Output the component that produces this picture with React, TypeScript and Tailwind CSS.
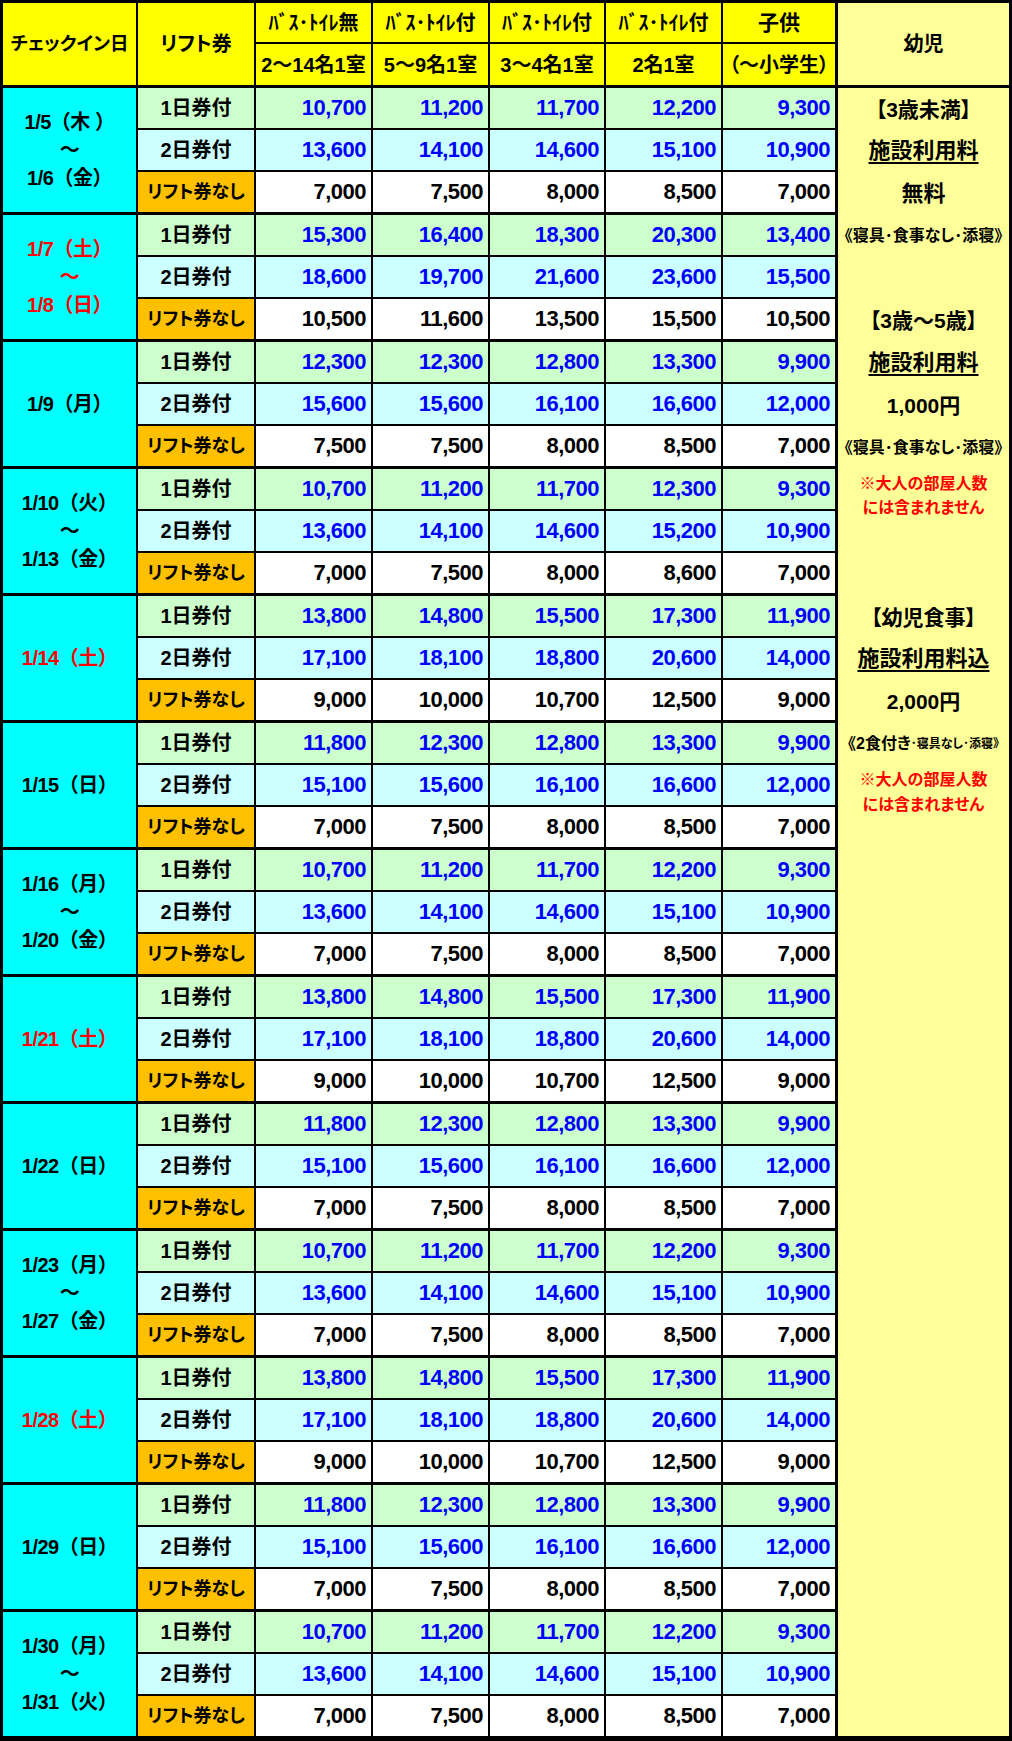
import React from 'react';

type Group = { date: string[]; red: boolean; rows: string[][] };

const WEEKDAY = [
  ['10,700', '11,200', '11,700', '12,200', '9,300'],
  ['13,600', '14,100', '14,600', '15,100', '10,900'],
  ['7,000', '7,500', '8,000', '8,500', '7,000'],
];
const SAT = [
  ['13,800', '14,800', '15,500', '17,300', '11,900'],
  ['17,100', '18,100', '18,800', '20,600', '14,000'],
  ['9,000', '10,000', '10,700', '12,500', '9,000'],
];
const SUN = [
  ['11,800', '12,300', '12,800', '13,300', '9,900'],
  ['15,100', '15,600', '16,100', '16,600', '12,000'],
  ['7,000', '7,500', '8,000', '8,500', '7,000'],
];

const groups: Group[] = [
  { date: ['1/5（木 ）', '～', '1/6（金）'], red: false, rows: WEEKDAY },
  {
    date: ['1/7（土）', '～', '1/8（日）'], red: true, rows: [
      ['15,300', '16,400', '18,300', '20,300', '13,400'],
      ['18,600', '19,700', '21,600', '23,600', '15,500'],
      ['10,500', '11,600', '13,500', '15,500', '10,500'],
    ]
  },
  {
    date: ['1/9（月）'], red: false, rows: [
      ['12,300', '12,300', '12,800', '13,300', '9,900'],
      ['15,600', '15,600', '16,100', '16,600', '12,000'],
      ['7,500', '7,500', '8,000', '8,500', '7,000'],
    ]
  },
  {
    date: ['1/10（火）', '～', '1/13（金）'], red: false, rows: [
      ['10,700', '11,200', '11,700', '12,300', '9,300'],
      ['13,600', '14,100', '14,600', '15,200', '10,900'],
      ['7,000', '7,500', '8,000', '8,600', '7,000'],
    ]
  },
  { date: ['1/14（土）'], red: true, rows: SAT },
  { date: ['1/15（日）'], red: false, rows: SUN },
  { date: ['1/16（月）', '～', '1/20（金）'], red: false, rows: WEEKDAY },
  { date: ['1/21（土）'], red: true, rows: SAT },
  { date: ['1/22（日）'], red: false, rows: SUN },
  { date: ['1/23（月）', '～', '1/27（金）'], red: false, rows: WEEKDAY },
  { date: ['1/28（土）'], red: true, rows: SAT },
  { date: ['1/29（日）'], red: false, rows: SUN },
  { date: ['1/30（月）', '～', '1/31（火）'], red: false, rows: WEEKDAY },
];

const labels = ['1日券付', '2日券付', 'リフト券なし'];
const labelBg = ['bg-[#ccffcc]', 'bg-[#ccffff]', 'bg-[#ffc000]'];
const valBg = ['bg-[#ccffcc]', 'bg-[#ccffff]', 'bg-white'];
const valColor = ['text-[#0000ff]', 'text-[#0000ff]', 'text-black'];

// 幼児欄：行の高さに合わせて1行ずつ積む
function InfantColumn() {
  return (
    <div className="flex flex-col text-[21px] font-bold text-black leading-none">
      <div className="h-[42px] flex items-center justify-center">【3歳未満】</div>
      <div className="h-[42px] flex items-center justify-center text-[22px]">
        <span className="underline underline-offset-[4px] decoration-[1.5px]">施設利用料</span>
      </div>
      <div className="h-[43px] flex items-center justify-center text-[22px]">無料</div>
      <div className="h-[42px] flex items-center justify-center text-[16px]">《寝具･食事なし･添寝》</div>
      <div className="h-[42px]" />
      <div className="h-[43px] flex items-center justify-center">【3歳～5歳】</div>
      <div className="h-[42px] flex items-center justify-center text-[22px]">
        <span className="underline underline-offset-[4px] decoration-[1.5px]">施設利用料</span>
      </div>
      <div className="h-[42px] flex items-center justify-center">1,000円</div>
      <div className="h-[43px] flex items-center justify-center text-[16px]">《寝具･食事なし･添寝》</div>
      <div className="h-[127px] pt-[3px] text-[#ff0000] text-[16px] leading-[24px] text-center">
        <div>※大人の部屋人数</div>
        <div>には含まれません</div>
      </div>
      <div className="h-[42px] flex items-center justify-center">【幼児食事】</div>
      <div className="h-[42px] flex items-center justify-center text-[22px]">
        <span className="underline underline-offset-[4px] decoration-[1.5px]">施設利用料込</span>
      </div>
      <div className="h-[43px] flex items-center justify-center">2,000円</div>
      <div className="h-[42px] flex items-center justify-center text-[16px]">
        《2食付き<span className="text-[12px]">･寝具なし･添寝》</span>
      </div>
      <div className="h-[127px] pt-[2px] text-[#ff0000] text-[16px] leading-[25px] text-center">
        <div>※大人の部屋人数</div>
        <div>には含まれません</div>
      </div>
    </div>
  );
}

export default function App() {
  return (
    <div className="w-[1012px] bg-white font-['Liberation_Sans','Noto_Sans_CJK_JP',sans-serif] font-bold text-black [font-feature-settings:'palt']">
      <table className="w-[1012px] table-fixed border-separate border-spacing-0 border-t-[3px] border-l-[3px] border-b-[2px] border-black">
        <colgroup>
          <col className="w-[135px]" />
          <col className="w-[118px]" />
          <col className="w-[117px]" />
          <col className="w-[117px]" />
          <col className="w-[116px]" />
          <col className="w-[117px]" />
          <col className="w-[115px]" />
          <col className="w-[174px]" />
        </colgroup>
        <thead>
          <tr>
            <th rowSpan={2} className="bg-[#ffff00] border-r-2 border-b-[3px] border-black text-[18.5px] font-bold">チェックイン日</th>
            <th rowSpan={2} className="bg-[#ffff00] border-r-2 border-b-[3px] border-black text-[20px] font-bold">リフト券</th>
            <th className="h-[41px] bg-[#ffff00] border-r-2 border-b-2 border-black text-[20px] font-bold">ﾊﾞｽ･ﾄｲﾚ無</th>
            <th className="h-[41px] bg-[#ffff00] border-r-2 border-b-2 border-black text-[20px] font-bold">ﾊﾞｽ･ﾄｲﾚ付</th>
            <th className="h-[41px] bg-[#ffff00] border-r-2 border-b-2 border-black text-[20px] font-bold">ﾊﾞｽ･ﾄｲﾚ付</th>
            <th className="h-[41px] bg-[#ffff00] border-r-2 border-b-2 border-black text-[20px] font-bold">ﾊﾞｽ･ﾄｲﾚ付</th>
            <th className="h-[41px] bg-[#ffff00] border-r-[3px] border-b-2 border-black text-[21px] font-bold">子供</th>
            <th rowSpan={2} className="bg-[#ffff99] border-r-[3px] border-b-[3px] border-black text-[20px] font-bold">幼児</th>
          </tr>
          <tr>
            <th className="h-[44px] bg-[#ffff00] border-r-2 border-b-[3px] border-black text-[20px] font-bold">2～14名1室</th>
            <th className="h-[44px] bg-[#ffff00] border-r-2 border-b-[3px] border-black text-[20px] font-bold">5～9名1室</th>
            <th className="h-[44px] bg-[#ffff00] border-r-2 border-b-[3px] border-black text-[20px] font-bold">3～4名1室</th>
            <th className="h-[44px] bg-[#ffff00] border-r-2 border-b-[3px] border-black text-[20px] font-bold">2名1室</th>
            <th className="h-[44px] bg-[#ffff00] border-r-[3px] border-b-[3px] border-black text-[20px] font-bold">（～小学生）</th>
          </tr>
        </thead>
        <tbody>
          {groups.map((g, gi) =>
            g.rows.map((row, ri) => {
              const last = ri === 2;
              const rowCls = last ? 'h-[43px] border-b-[3px]' : 'h-[42px] border-b-2';
              return (
                <tr key={`${gi}-${ri}`}>
                  {ri === 0 && (
                    <td rowSpan={3} className={`bg-[#00ffff] border-r-2 border-b-[3px] border-black text-center text-[20px] tracking-[-0.5px] leading-[28px] [font-feature-settings:normal] ${g.red ? 'text-[#ff0000]' : 'text-black'}`}>
                      {g.date.map((d, di) => (
                        <div key={di}>{d}</div>
                      ))}
                    </td>
                  )}
                  <td className={`${rowCls} ${labelBg[ri]} border-r-2 border-black text-center ${last ? 'text-[18px]' : 'text-[20px]'} leading-none`}>
                    {labels[ri]}
                  </td>
                  {row.map((v, vi) => (
                    <td
                      key={vi}
                      className={`${rowCls} ${valBg[ri]} ${valColor[ri]} ${vi === 4 ? 'border-r-[3px]' : 'border-r-2'} border-black text-right pr-[5px] text-[22px] tracking-[-0.5px] leading-none`}
                    >
                      {v}
                    </td>
                  ))}
                  {gi === 0 && ri === 0 && (
                    <td rowSpan={39} className="bg-[#ffff99] border-r-[3px] border-b-[3px] border-black align-top p-0">
                      <InfantColumn />
                    </td>
                  )}
                </tr>
              );
            })
          )}
        </tbody>
      </table>
    </div>
  );
}
